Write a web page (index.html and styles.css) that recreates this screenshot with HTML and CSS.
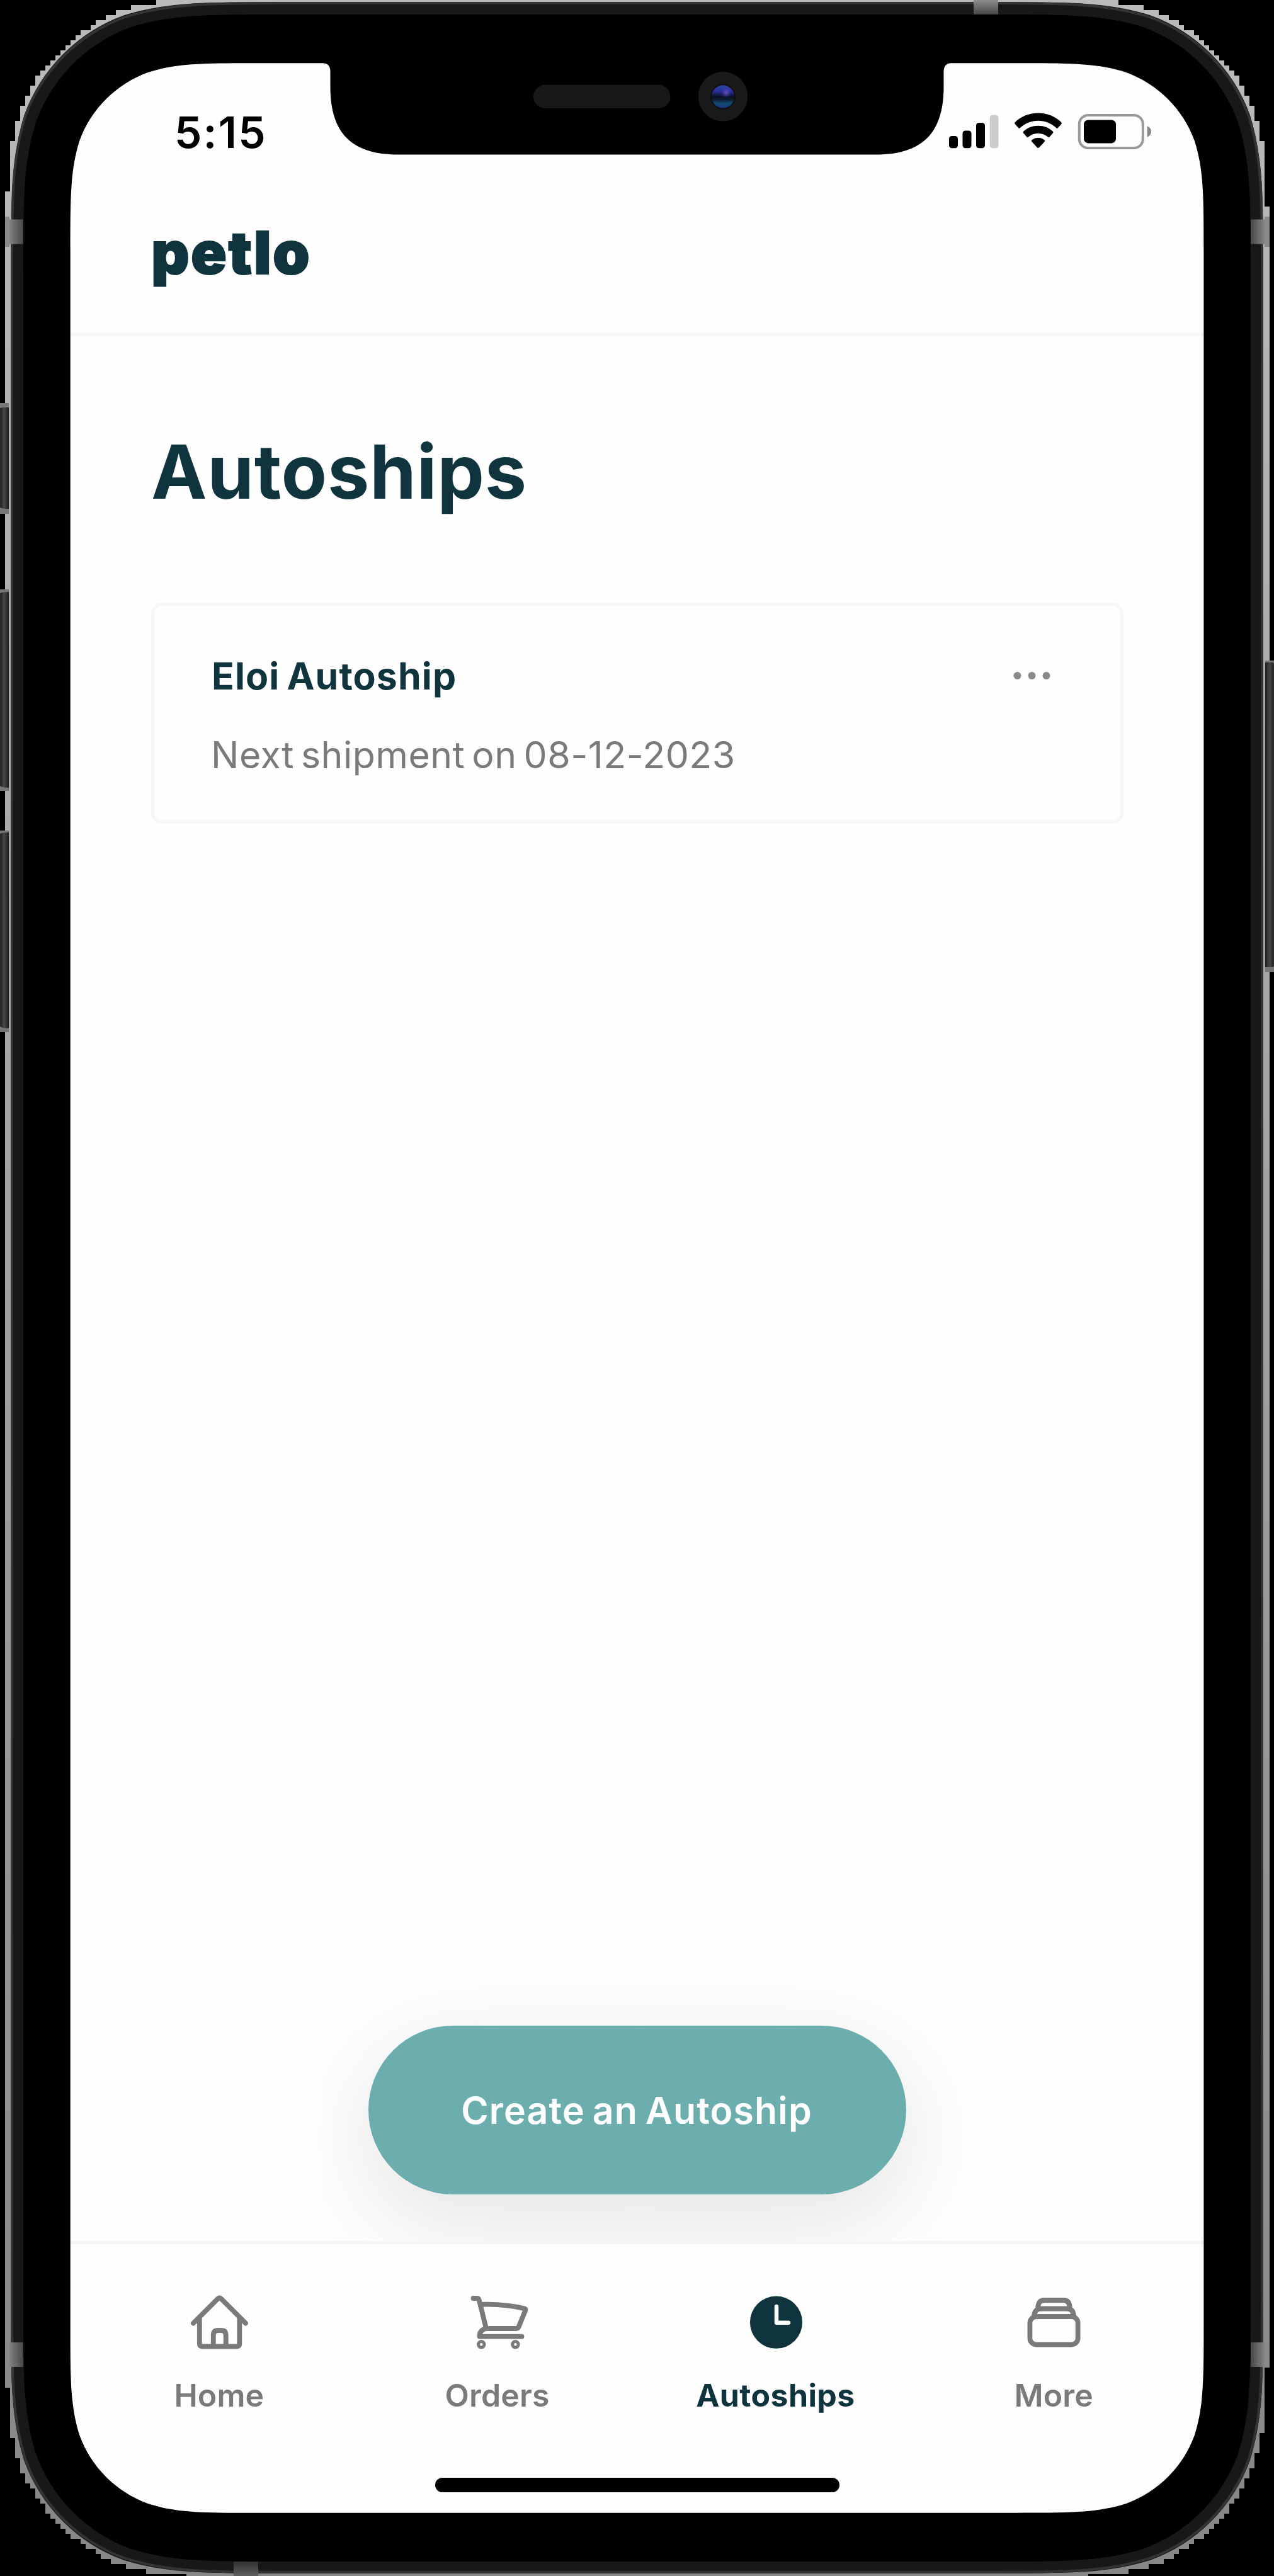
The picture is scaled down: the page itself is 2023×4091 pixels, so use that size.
FILE: index.html
```html
<!DOCTYPE html>
<html lang="en">
<head>
<meta charset="utf-8">
<title>petlo – Autoships</title>
<link rel="stylesheet" href="styles.css">
</head>
<body>
<div class="device">
  <svg class="device-frame" viewBox="0 0 2023 4091" aria-hidden="true">
    <defs>
      <linearGradient id="rim" x1="0" y1="0" x2="0" y2="1"><stop offset="0" stop-color="#bababa"/><stop offset="1" stop-color="#868686"/></linearGradient>
      <linearGradient id="key"><stop offset="0" stop-color="#303030"/><stop offset=".12" stop-color="#262626"/><stop offset=".45" stop-color="#484848"/><stop offset=".8" stop-color="#2e2e2e"/><stop offset="1" stop-color="#1c1c1c"/></linearGradient>
      <linearGradient id="keyR" href="#key" gradientTransform="matrix(-1 0 0 1 1 0)"/>
      <linearGradient id="bandL"><stop offset="0" stop-color="#858585"/><stop offset="1" stop-color="#484848"/></linearGradient>
      <linearGradient id="bandR"><stop offset="0" stop-color="#484848"/><stop offset="1" stop-color="#858585"/></linearGradient>
      <linearGradient id="bandT" x1="0" y1="0" x2="0" y2="1"><stop offset="0" stop-color="#8c8c8c"/><stop offset="1" stop-color="#484848"/></linearGradient>
      <linearGradient id="bandB" x1="0" y1="0" x2="0" y2="1"><stop offset="0" stop-color="#303030"/><stop offset="1" stop-color="#606060"/></linearGradient>
      <linearGradient id="lens" x1="0" y1="0" x2="0" y2="1"><stop offset="0" stop-color="#2a48a0"/><stop offset=".25" stop-color="#2b2f9c"/><stop offset=".5" stop-color="#0b1026"/><stop offset=".62" stop-color="#0a1c30"/><stop offset=".8" stop-color="#134a72"/><stop offset="1" stop-color="#15377a"/></linearGradient>
      <radialGradient id="glint"><stop offset="0" stop-color="#6a55c8"/><stop offset="1" stop-color="#3a2fa8" stop-opacity="0"/></radialGradient>
    </defs>
    <path fill="url(#rim)" d="M248 0V8H208V16H184V24H168V32H152V40H144V48H128V56H120V64H112V72H104V80H96V88H88V96H80V104H72V112H64V120H56V136H48V152H40V168H32V192H24V224H16V304H8V3792H16V3872H24V3904H32V3928H40V3944H48V3952H56V3968H64V3976H72V3992H80V4000H88V4008H96V4016H104V4024H112V4032H128V4040H136V4048H152V4056H160V4064H176V4072H200V4080H232V4088H296V4091H1728V4088H1792V4080H1824V4072H1848V4064H1864V4056H1872V4048H1888V4040H1896V4032H1912V4024H1920V4016H1928V4008H1936V4000H1944V3992H1952V3976H1960V3968H1968V3952H1976V3936H1984V3920H1992V3896H2000V3864H2008V3760H2016V328H2008V224H2000V192H1992V168H1984V152H1976V136H1968V120H1960V112H1952V104H1944V96H1936V88H1928V80H1920V72H1912V64H1904V56H1896V48H1880V40H1872V32H1856V24H1840V16H1816V8H1776V0Z"/>
    <g fill="url(#key)">
      <path fill="#777" d="M0 640H14V816H0ZM0 936H14V1256H0ZM0 1319H14V1639H0ZM2009 1049H2023V1544H2009Z"/>
      <path d="M0 648Q3 647 14 647V808Q3 808 0 806Z"/>
      <path d="M0 942Q3 940 14 940V1251Q3 1251 0 1248Z"/>
      <path d="M0 1324Q3 1322 14 1322V1633Q3 1633 0 1630Z"/>
      <path fill="url(#keyR)" d="M2009 1052H2020Q2023 1052 2023 1055V1533Q2023 1536 2020 1536H2009Z"/>
    </g>
    <path fill="#181818" stroke="url(#rim)" stroke-width="2" d="M16.5 437.7c0-125.5 0-188.2 21.3-255.7c26.9-73.7 85-131.8 158.7-158.7c67.5-21.3 130.2-21.3 255.7-21.3H1571.3c125.5 0 188.2 0 255.7 21.3c73.7 26.9 131.8 85 158.7 158.7c21.3 67.5 21.3 130.2 21.3 255.7V3652.3c0 125.5 0 188.2-21.3 255.7c-26.9 73.7-85 131.8-158.7 158.7c-67.5 21.3-130.2 21.3-255.7 21.3H451.7c-125.5 0-188.2 0-255.7-21.3c-73.7-26.9-131.8-85-158.7-158.7c-21.3-67.5-21.3-130.2-21.3-255.7Z"/>
    <path fill="none" stroke="#333" stroke-width="4" d="M19 437.7c0-125.5 0-186.2 21.3-253.7c26.9-72.7 84-129.8 157.7-156.7c67.5-21.3 128.2-22.3 253.7-22.3H1571.3c125.5 0 187.2 1 254.7 22.3c73.7 26.9 129.8 84 156.7 156.7c21.3 67.5 21.3 128.2 21.3 253.7V3652.3c0 125.5 0 186.2-21.3 253.7c-26.9 73.7-83 129.8-156.7 156.7c-67.5 21.3-129.2 22.3-254.7 22.3H451.7c-125.5 0-186.2-1-253.7-22.3c-73.7-26.9-130.8-83-157.7-156.7c-21.3-67.5-21.3-128.2-21.3-253.7Z"/>
    <path fill="url(#bandL)" d="M14 348.5H37V387.5H14ZM14 3720H37V3759H14Z"/>
    <path fill="#8a8a8a" d="M8 344H15V392H8ZM8 3720H15V3759H8ZM2008 344H2016V392H2008ZM2008 3720H2016V3759H2008Z"/>
    <path fill="url(#bandR)" d="M1986 348.5H2008V387.5H1986ZM1986 3720H2008V3759H1986Z"/>
    <path fill="url(#bandT)" d="M1546 0H1585V23H1546Z"/>
    <path fill="url(#bandB)" d="M371 4068H410V4091H371Z"/>
    <path fill="#000" d="M37 435.7c0-118.8 0-178.2 20.2-242.2c25.4-69.8 80.5-124.9 150.3-150.3c64-20.2 123.4-20.2 242.2-20.2H1573.3c118.8 0 178.2 0 242.2 20.2c69.8 25.4 124.9 80.5 150.3 150.3c20.2 64 20.2 123.4 20.2 242.2V3655.3c0 118.8 0 178.2-20.2 242.2c-25.4 69.8-80.5 124.9-150.3 150.3c-64 20.2-123.4 20.2-242.2 20.2H449.7c-118.8 0-178.2 0-242.2-20.2c-69.8-25.4-124.9-80.5-150.3-150.3c-20.2-64-20.2-123.4-20.2-242.2Z"/>
    <path fill="#fefefe" d="M111.7 398.4c0-85.8 0-128.8 14.6-175c18.4-50.4 58.1-90.1 108.5-108.5c46.2-14.6 89.2-14.6 175-14.6H512Q524.5 100.3 524.5 114V138C524.5 211.5 558.5 245.5 632 245.5H1391C1464.5 245.5 1498.5 211.5 1498.5 138V114Q1498.5 100.3 1511 100.3H1613.3c85.8 0 128.8 0 175 14.6c50.4 18.4 90.1 58.1 108.5 108.5c14.6 46.2 14.6 89.2 14.6 175V3692.6c0 85.8 0 128.8-14.6 175c-18.4 50.4-58.1 90.1-108.5 108.5c-46.2 14.6-89.2 14.6-175 14.6H409.8c-85.8 0-128.8 0-175-14.6c-50.4-18.4-90.1-58.1-108.5-108.5c-14.6-46.2-14.6-89.2-14.6-175Z"/>
    <rect x="847" y="134.7" width="217.5" height="37.3" rx="18.6" fill="#181818"/>
    <circle cx="1148" cy="153.3" r="39.2" fill="#1a1a1a"/>
    <circle cx="1148" cy="153.5" r="20" fill="#0d0d12"/>
    <circle cx="1148" cy="153.5" r="18.2" fill="url(#lens)"/>
    <circle cx="1153" cy="147" r="9" fill="url(#glint)"/>
  </svg>

  <div class="screen">
    <div class="status-bar">
      <span class="time">5:15</span>
      <svg class="status-icons" width="322" height="60" viewBox="1507 178 322 60" role="img" aria-label="Signal, Wi-Fi, battery">
        <rect x="1507" y="216" width="14" height="19.3" rx="4.5"/>
        <rect x="1528.5" y="207.5" width="14" height="27.8" rx="4.5"/>
        <rect x="1550" y="195" width="14" height="40.3" rx="4.5"/>
        <rect x="1571.7" y="182.5" width="13.8" height="52.8" rx="4.5" fill="#ccc"/>
        <path d="M1648.5 179.6c14.4 0 27.2 5.4 36.8 14.6q1.3 1.300 0 2.700l-5.300 6.200q-1.200 1.300-2.600.1c-7.600-7-17.700-11.400-28.900-11.400s-21.300 4.400-28.900 11.400q-1.400 1.200-2.600-.1l-5.300-6.200q-1.300-1.400 0-2.700c9.600-9.200 22.400-14.600 36.800-14.600Z"/>
        <path d="M1648.500 199.800c9.200 0 17.200 3.300 23.400 8.900q1.300 1.200.1 2.600l-5.400 6.200q-1.200 1.200-2.500.1c-4.200-3.700-9.500-5.900-15.600-5.900s-11.400 2.200-15.600 5.900q-1.300 1.100-2.500-.1l-5.400-6.200q-1.200-1.400.1-2.600c6.200-5.600 14.200-8.900 23.400-8.900Z"/>
        <path d="M1648.500 218.800c4 0 7.500 1.400 10.200 3.800q1.200 1.100 0 2.500l-8.600 9.200q-1.600 1.500-3.200 0l-8.600-9.200q-1.200-1.400 0-2.500c2.700-2.400 6.200-3.800 10.200-3.800Z"/>
        <rect x="1713.800" y="183" width="101" height="52" rx="14" fill="none" stroke="#999" stroke-width="4"/>
        <rect x="1721" y="190.400" width="51" height="37" rx="7"/>
        <path d="M1821.700 200.300c4 1.600 6.300 4.900 6.300 8.800s-2.300 7.200-6.300 8.800Z" fill="#888"/>
      </svg>
    </div>

    <header class="app-header"><span class="logo">petlo</span></header>

    <main class="content">
      <h1 class="title">Autoships</h1>
      <article class="card">
        <div class="card-head">
          <h2 class="card-title">Eloi Autoship</h2>
          <svg width="59" height="14" viewBox="0 0 59 14" fill="#8a8a8a" role="img" aria-label="More options"><circle cx="6.500" cy="6" r="6"/><circle cx="29.500" cy="6" r="6"/><circle cx="52.500" cy="6" r="6"/></svg>
        </div>
        <p class="card-text">Next shipment on 08-12-2023</p>
      </article>
      <button class="create">Create an Autoship</button>
    </main>

    <nav class="nav">
      <div class="tabs">
        <a class="tab">
          <svg class="icon" viewBox="0 0 96 96"><path d="M6 49.500 45 10.600Q47.500 7.800 50 10.600L89 49.500M15.800 40.500V82Q15.800 86.500 20.500 86.500H75Q79.300 86.500 79.300 82V40.500M37.800 86V68.500Q37.800 61 45 61H50.500Q57.700 61 57.700 68.500V86"/></svg>
          <span>Home</span>
        </a>
        <a class="tab">
          <svg class="icon" viewBox="0 0 96 96"><path d="M8.500 10H14.500Q17 10 17.800 13L28.900 57.500M22 19.700Q58 18.500 89.500 26.200Q92 27.200 91.200 29.500L80.500 55.500Q79.500 58 76.500 58H28.900Q18.700 60.500 18.700 69V70.700H85.500"/><circle class="wheel" cx="21.300" cy="83.300" r="4.700"/><circle class="wheel" cx="75.400" cy="83.300" r="4.700"/></svg>
          <span>Orders</span>
        </a>
        <a class="tab active">
          <svg class="icon" viewBox="0 0 96 96"><circle class="face" cx="48.500" cy="48.200" r="41.600"/><path class="hands" d="M49 23V48.800H68"/></svg>
          <span>Autoships</span>
        </a>
        <a class="tab">
          <svg class="icon" viewBox="0 0 96 96"><rect x="9.400" y="39" width="76.200" height="44.500" rx="10"/><path d="M16 39.500Q16 26.500 27 26.500H68Q79 26.500 79 39.500M22 27.500Q22 13 32 13H63Q73 13 73 27.500"/></svg>
          <span>More</span>
        </a>
      </div>
      <div class="home-indicator"></div>
    </nav>
  </div>
</div>
</body>
</html>
```
FILE: styles.css
```css
* {
  box-sizing: border-box;
}

body {
  margin: 0;
  background: #000;
  font-family: Inter, "Liberation Sans", sans-serif;
  color: #0f343d;
}

h1,
h2,
p {
  margin: 0;
}

.device {
  position: relative;
  width: 2023px;
  height: 4091px;
  padding: 100px 112px;
  overflow: hidden;
}

.device-frame {
  position: absolute;
  inset: 0;
  width: 2023px;
  height: 4091px;
}

.screen {
  position: relative;
  display: flex;
  flex-direction: column;
  width: 1799px;
  height: 3891px;
}

.status-bar {
  display: flex;
  align-items: flex-start;
  justify-content: space-between;
  height: 220px;
  padding: 68px 82px 0 165px;
  color: #000;
}

.time {
  font-size: 69px;
  line-height: 84px;
  font-weight: 600;
  letter-spacing: 2.2px;
}

.status-icons {
  margin-top: 10px;
}

.app-header {
  height: 214px;
  padding: 35px 128px 0;
  border-bottom: 5px solid #f6f6f6;
}

.logo {
  display: block;
  font-size: 94px;
  line-height: 93px;
  font-weight: 900;
  letter-spacing: 2.4px;
  -webkit-text-stroke: 2px #0f343d;
}

.content {
  flex: 1;
  display: flex;
  flex-direction: column;
  padding: 145px 127px 74px 128px;
}

.title {
  font-size: 118.7px;
  line-height: 140px;
  font-weight: 700;
  letter-spacing: 0.6px;
}

.card {
  height: 351px;
  margin-top: 138px;
  padding: 72px 111px 0 91px;
  border: 5px solid #f7f7f7;
  border-radius: 17px;
}

.card-head {
  display: flex;
  align-items: center;
  justify-content: space-between;
}

.card-title {
  font-size: 59px;
  line-height: 80px;
  font-weight: 700;
  letter-spacing: 1.1px;
  word-spacing: -4px;
}

.card-text {
  margin: 45px 0 0 -1px;
  font-size: 59px;
  line-height: 80px;
  letter-spacing: 0.45px;
  word-spacing: -6px;
  color: #7a7a7a;
}

.create {
  align-self: center;
  width: 854px;
  height: 268px;
  margin-top: auto;
  padding: 2px 2px 0 0;
  border: 0;
  border-radius: 134px;
  background: #6cadae;
  box-shadow: 0 42px 150px rgba(0, 0, 0, 0.11);
  color: #fff;
  font: 600 59px/80px Inter, "Liberation Sans", sans-serif;
  letter-spacing: 1.1px;
  word-spacing: -4px;
}

.nav {
  position: relative;
  height: 432px;
  padding: 76px 16px 0;
  border-top: 5px solid #f5f5f5;
  background: linear-gradient(#fefefe, #fefefe) top / 100% 200px no-repeat;
}

.tabs {
  display: grid;
  grid-template-columns: repeat(4, 1fr);
}

.tab {
  display: flex;
  flex-direction: column;
  align-items: center;
  gap: 38px;
  font-size: 50px;
  line-height: 60px;
  font-weight: 600;
  letter-spacing: 0.15px;
  color: #7a7a7a;
}

.tab span {
  padding-right: 2px;
}

.tab.active {
  font-weight: 700;
  letter-spacing: 0.36px;
  color: #0f343d;
}

.icon {
  width: 96px;
  height: 96px;
  fill: none;
  stroke: currentColor;
  stroke-width: 7.8;
  stroke-linecap: round;
  stroke-linejoin: round;
}

.wheel {
  stroke-width: 5;
}

.face {
  fill: currentColor;
  stroke: none;
}

.hands {
  stroke: #fff;
  stroke-width: 6.5;
}

.home-indicator {
  width: 642px;
  height: 23px;
  margin: 101px auto 0;
  border-radius: 12px;
  background: #000;
}
```
